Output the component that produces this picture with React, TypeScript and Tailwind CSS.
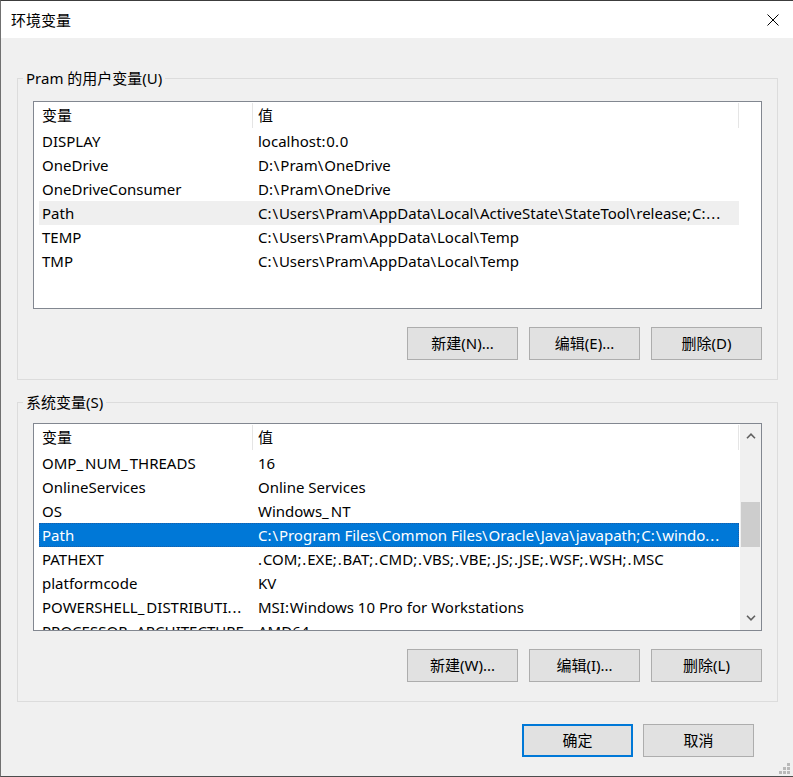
import React from "react";

type Row = { name: string; value: string; state?: "hover" | "selected" };

const userRows: Row[] = [
  { name: "DISPLAY", value: "localhost:0.0" },
  { name: "OneDrive", value: "D:\\Pram\\OneDrive" },
  { name: "OneDriveConsumer", value: "D:\\Pram\\OneDrive" },
  {
    name: "Path",
    value: "C:\\Users\\Pram\\AppData\\Local\\ActiveState\\StateTool\\release;C:...",
    state: "hover",
  },
  { name: "TEMP", value: "C:\\Users\\Pram\\AppData\\Local\\Temp" },
  { name: "TMP", value: "C:\\Users\\Pram\\AppData\\Local\\Temp" },
];

const sysRows: Row[] = [
  { name: "OMP_NUM_THREADS", value: "16" },
  { name: "OnlineServices", value: "Online Services" },
  { name: "OS", value: "Windows_NT" },
  {
    name: "Path",
    value: "C:\\Program Files\\Common Files\\Oracle\\Java\\javapath;C:\\windo...",
    state: "selected",
  },
  { name: "PATHEXT", value: ".COM;.EXE;.BAT;.CMD;.VBS;.VBE;.JS;.JSE;.WSF;.WSH;.MSC" },
  { name: "platformcode", value: "KV" },
  { name: "POWERSHELL_DISTRIBUTI...", value: "MSI:Windows 10 Pro for Workstations" },
  { name: "PROCESSOR_ARCHITECTURE", value: "AMD64" },
];

// The reference face (Microsoft YaHei UI) has wider punctuation than Noto Sans.
function Txt({ s }: { s: string }) {
  const parts = s.split(/([.;:\\_]+)/);
  return (
    <>
      {parts.map((p, i) =>
        p === "" ? null : /^[.;:\\]+$/.test(p) ? (
          <span key={i} className="tracking-[0.9px]">
            {p}
          </span>
        ) : /^_+$/.test(p) ? (
          <span key={i} className="tracking-[2px]">
            {p}
          </span>
        ) : (
          <span key={i}>{p}</span>
        )
      )}
    </>
  );
}

function Chevron({ up }: { up: boolean }) {
  return (
    <svg width="10" height="6" viewBox="0 0 10 6">
      <polyline
        points={up ? "1,5.2 5,1.2 9,5.2" : "1,0.8 5,4.8 9,0.8"}
        fill="none"
        stroke="#606060"
        strokeWidth="1.6"
      />
    </svg>
  );
}

function ListView({ rows, scroll }: { rows: Row[]; scroll?: boolean }) {
  return (
    <div className="h-[208px] border border-[#828790] bg-white flex overflow-hidden">
      <div className="flex-1 min-w-0 pl-[5px] overflow-hidden">
        <div className="flex h-[27px] w-[700px]">
          <div className="w-[214px] flex items-center justify-between">
            <span className="pl-[3px]">变量</span>
            <div className="w-px h-[25px] bg-[#e5e5e5]" />
          </div>
          <div className="w-[486px] flex items-center justify-between">
            <span className="pl-[5px]">值</span>
            <div className="w-px h-[25px] bg-[#e5e5e5]" />
          </div>
        </div>
        {rows.map((r, i) => (
          <div
            key={i}
            className={
              "flex h-[24px] w-[700px] items-center " +
              (r.state === "selected"
                ? "bg-[#0078d7] text-white outline outline-1 outline-dotted outline-offset-[-1px] outline-[#1a5fa8]"
                : r.state === "hover"
                ? "bg-[#efefef]"
                : "")
            }
          >
            <div className="w-[214px] pl-[3px] whitespace-nowrap overflow-hidden text-ellipsis">
              <Txt s={r.name} />
            </div>
            <div className="w-[486px] pl-[5px] whitespace-nowrap overflow-hidden text-ellipsis">
              <Txt s={r.value} />
            </div>
          </div>
        ))}
      </div>
      {scroll && (
        <div className="w-[21px] shrink-0 bg-[#f0f0f0] flex flex-col">
          <div className="h-[24px] flex items-center justify-center">
            <Chevron up />
          </div>
          <div className="flex-1">
            <div className="mt-[54px] mx-[1px] h-[45px] bg-[#cdcdcd]" />
          </div>
          <div className="h-[24px] flex items-center justify-center">
            <Chevron up={false} />
          </div>
        </div>
      )}
    </div>
  );
}

function Btn({ label, primary }: { label: string; primary?: boolean }) {
  return (
    <div
      className={
        "w-[111px] h-[33px] flex items-center justify-center bg-[#e1e1e1] " +
        (primary ? "border-2 border-[#0078d7]" : "border border-[#adadad]")
      }
    >
      {label}
    </div>
  );
}

function Group({
  label,
  className,
  listTop,
  children,
}: {
  label: string;
  className: string;
  listTop: string;
  children: React.ReactNode;
}) {
  return (
    <fieldset className={"border border-[#dcdcdc] " + className}>
      <legend className="ml-[5px] px-[3px] leading-[20px]">{label}</legend>
      <div className={"px-[15px] pb-[19px] " + listTop}>{children}</div>
    </fieldset>
  );
}

export default function App() {
  return (
    <div className="relative w-[793px] h-[777px] overflow-hidden bg-[#f0f0f0] border-t border-b border-l border-t-[#3c3c3c] border-b-[#4d4d4d] border-l-[#707070] font-['Noto_Sans','Noto_Sans_CJK_SC',sans-serif] text-[15px] text-black flex flex-col">
      <div className="h-[37px] shrink-0 bg-white flex items-center justify-between pl-[10px] pr-[14px]">
        <span className="leading-[20px]">环境变量</span>
        <svg width="12" height="12" viewBox="0 0 12 12">
          <path d="M0.5 0.5 L11.5 11.5 M11.5 0.5 L0.5 11.5" stroke="#000" strokeWidth="1" />
        </svg>
      </div>
      <div className="flex flex-col pl-[16px] pr-[15px]">
        <Group label="Pram 的用户变量(U)" className="mt-[30px]" listTop="pt-[13px]">
          <ListView rows={userRows} />
          <div className="mt-[18px] flex justify-end gap-[11px]">
            <Btn label="新建(N)..." />
            <Btn label="编辑(E)..." />
            <Btn label="删除(D)" />
          </div>
        </Group>
        <Group label="系统变量(S)" className="mt-[12px]" listTop="pt-[11px]">
          <ListView rows={sysRows} scroll />
          <div className="mt-[18px] flex justify-end gap-[11px]">
            <Btn label="新建(W)..." />
            <Btn label="编辑(I)..." />
            <Btn label="删除(L)" />
          </div>
        </Group>
        <div className="mt-[22px] mr-[24px] flex justify-end gap-[10px]">
          <Btn label="确定" primary />
          <Btn label="取消" />
        </div>
      </div>
      <div className="absolute right-[3px] bottom-[2px] w-[11px] h-[11px]">
        <div className="absolute left-[8px] top-0 w-[3px] h-[3px] bg-[#b9b9b9]" />
        <div className="absolute left-[4px] top-[4px] w-[3px] h-[3px] bg-[#b9b9b9]" />
        <div className="absolute left-[8px] top-[4px] w-[3px] h-[3px] bg-[#b9b9b9]" />
        <div className="absolute left-0 top-[8px] w-[3px] h-[3px] bg-[#b9b9b9]" />
        <div className="absolute left-[4px] top-[8px] w-[3px] h-[3px] bg-[#b9b9b9]" />
        <div className="absolute left-[8px] top-[8px] w-[3px] h-[3px] bg-[#b9b9b9]" />
      </div>
    </div>
  );
}
